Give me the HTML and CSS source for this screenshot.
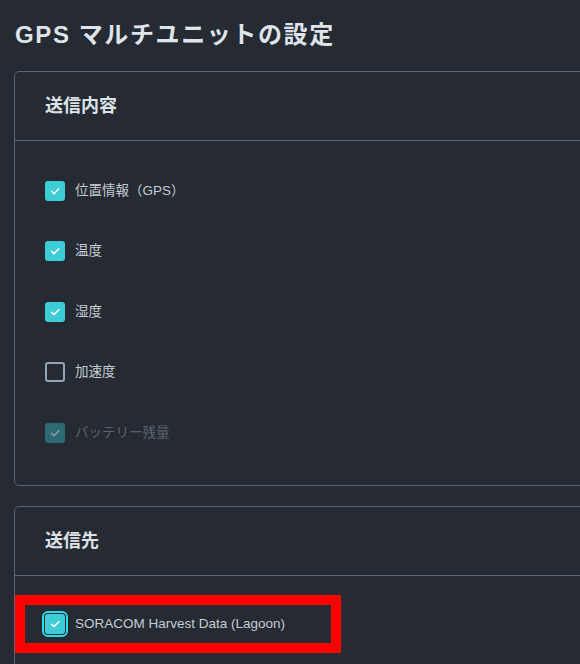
FILE: index.html
```html
<!DOCTYPE html>
<html lang="ja">
<head>
<meta charset="utf-8">
<title>GPS マルチユニットの設定</title>
<link rel="stylesheet" href="styles.css">
</head>
<body>
<main class="page">
  <h1 class="title">GPS マルチユニットの設定</h1>

  <section class="card">
    <header class="card-header"><h2 class="card-title">送信内容</h2></header>
    <div class="card-body">
      <div class="row">
        <span class="cb cb-checked"><svg viewBox="0 0 20 20" class="tick"><polyline points="6.5,10.3 9,12.8 13.8,7.8"/></svg></span>
        <span class="label">位置情報（GPS）</span>
      </div>
      <div class="row">
        <span class="cb cb-checked"><svg viewBox="0 0 20 20" class="tick"><polyline points="6.5,10.3 9,12.8 13.8,7.8"/></svg></span>
        <span class="label">温度</span>
      </div>
      <div class="row">
        <span class="cb cb-checked"><svg viewBox="0 0 20 20" class="tick"><polyline points="6.5,10.3 9,12.8 13.8,7.8"/></svg></span>
        <span class="label">湿度</span>
      </div>
      <div class="row">
        <span class="cb cb-empty"></span>
        <span class="label">加速度</span>
      </div>
      <div class="row row-disabled">
        <span class="cb cb-disabled"><svg viewBox="0 0 20 20" class="tick"><polyline points="6.5,10.3 9,12.8 13.8,7.8"/></svg></span>
        <span class="label">バッテリー残量</span>
      </div>
    </div>
  </section>

  <section class="card card-second">
    <header class="card-header"><h2 class="card-title">送信先</h2></header>
    <div class="card-body card-body-dest">
      <div class="row row-dest">
        <span class="cb cb-checked cb-focus"><svg viewBox="0 0 20 20" class="tick"><polyline points="6.5,10.3 9,12.8 13.8,7.8"/></svg></span>
        <span class="label label-latin">SORACOM Harvest Data (Lagoon)</span>
      </div>
      <div class="highlight"></div>
    </div>
  </section>
</main>
</body>
</html>
```

FILE: styles.css
```css
html, body {
  margin: 0;
  padding: 0;
  overflow: hidden;
  background: #252a33;
}

.page {
  font-family: "Liberation Sans", Arial, "Noto Sans CJK JP", sans-serif;
  color: #c9cfd6;
  padding: 19px 0 0 0;
}

.title {
  margin: 0 0 20px 15px;
  font-size: 24px;
  line-height: 32px;
  font-weight: 700;
  color: #dfe4ea;
  letter-spacing: 1.6px;
  white-space: nowrap;
}

.card {
  margin-left: 14px;
  margin-right: -12px;
  border: 1px solid #5b6578;
  border-radius: 5px;
}

.card-second {
  margin-top: 20px;
}

.card-header {
  height: 68px;
  display: flex;
  align-items: center;
  padding-left: 30px;
  border-bottom: 1px solid #5b6578;
}

.card-title {
  margin: 0;
  font-size: 18px;
  font-weight: 700;
  color: #dde2e8;
  line-height: 24px;
}

.card-body {
  padding: 19.5px 0 22px 0;
  position: relative;
}

.card-body-dest {
  padding-top: 18px;
}

.row {
  height: 60.5px;
  display: flex;
  align-items: center;
  padding-left: 30px;
  gap: 10px;
}

.cb {
  width: 20px;
  height: 20px;
  box-sizing: border-box;
  border-radius: 3px;
  display: flex;
  align-items: center;
  justify-content: center;
  flex: none;
}

.cb-checked {
  background: #3ccdd6;
}

.cb-empty {
  border: 2px solid #93a4b7;
}

.cb-disabled {
  background: #2d6b73;
}

.cb-focus {
  outline: 2px solid #27dcee;
  outline-offset: 1px;
  border-radius: 3px;
}

.tick {
  width: 20px;
  height: 20px;
  fill: none;
  stroke: #ffffff;
  stroke-width: 1.6;
  stroke-linecap: round;
  stroke-linejoin: round;
}

.cb-disabled .tick {
  stroke: #8a99a4;
}

.label {
  font-size: 13.5px;
  line-height: 18px;
  color: #c6ccd3;
}

.row-disabled .label {
  color: #5b646e;
}

.highlight {
  position: absolute;
  left: 0;
  top: 19px;
  width: 326px;
  height: 58px;
  box-sizing: border-box;
  border: 10px solid #ff0000;
}
```
